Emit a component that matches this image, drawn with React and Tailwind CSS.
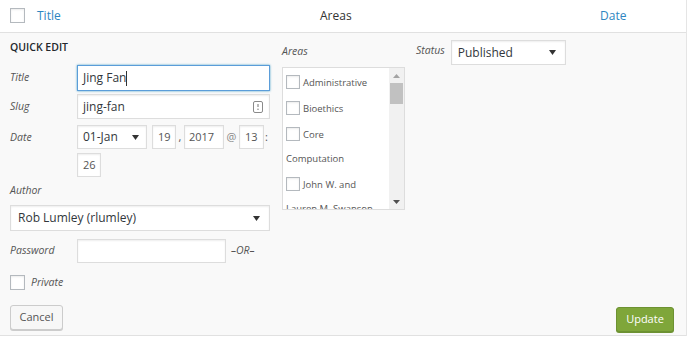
import React from "react";

const Check = ({ className = "" }) => (
  <span
    className={`inline-block bg-white border border-[#b4b9be] shadow-[inset_0_1px_2px_rgba(0,0,0,0.08)] ${className}`}
  />
);

const Caret = ({ color = "#333" }) => (
  <svg width="7" height="5" viewBox="0 0 7 5">
    <path d="M0 0h7L3.5 5z" fill={color} />
  </svg>
);

const field =
  "h-[24px] bg-white border border-[#ddd] shadow-[inset_0_1px_2px_rgba(0,0,0,0.07)] flex items-center";

const label = "italic text-[10.5px] text-[#555]";

export default function App() {
  const areas = ["Administrative", "Bioethics", "Core Computation", "John W. and Lauren M. Swanson"];

  return (
    <div className="w-[692px] h-[342px] bg-white overflow-hidden font-['Open_Sans',sans-serif] text-[#32373c]">
      <div className="w-[687px] border-r border-[#e5e5e5]">
        {/* list header */}
        <div className="h-[33px] border-b border-[#e1e1e1] flex items-center text-[12px] bg-white">
          <div className="w-[37px] pl-[10px] flex -mt-[1px]">
            <Check className="w-[15px] h-[15px]" />
          </div>
          <div className="w-[283px] text-[#2e86c1]">Title</div>
          <div className="w-[280px] text-[#333]">Areas</div>
          <div className="text-[#2e86c1]">Date</div>
        </div>

        {/* quick edit */}
        <div className="h-[303px] bg-[#f9f9f9] border-b border-[#e1e1e1] flex pl-[10px] pr-[12px]">
          {/* left column */}
          <div className="w-[260px] pt-[7px] flex flex-col">
            <div className="text-[10.5px] font-semibold leading-[14px] text-[#23282d] uppercase">
              Quick Edit
            </div>

            <div className="mt-[11px] flex items-center h-[26px]">
              <span className={`w-[67px] ${label}`}>Title</span>
              <div className="flex-1 h-[26px] bg-white border border-[#5b9dd9] shadow-[0_0_2px_rgba(30,140,190,0.8)] flex items-center px-[5px] text-[12px]">
                Jing Fan
                <span className="w-px h-[15px] bg-[#333]" />
              </div>
            </div>

            <div className="mt-[3px] flex items-center h-[25px]">
              <span className={`w-[67px] ${label}`}>Slug</span>
              <div className={`flex-1 !h-[25px] ${field} justify-between px-[5px] text-[12px]`}>
                jing-fan
                <svg width="10" height="12" viewBox="0 0 10 12" className="mr-[1px]">
                  <rect x="0.5" y="0.5" width="9" height="11" rx="1.5" fill="none" stroke="#8a8a8a" />
                  <path d="M5 3v3" stroke="#8a8a8a" strokeWidth="1.2" />
                  <circle cx="5" cy="8.3" r="0.8" fill="#8a8a8a" />
                </svg>
              </div>
            </div>

            <div className="mt-[6px] flex">
              <span className={`w-[67px] leading-[24px] ${label}`}>Date</span>
              <div className="flex-1 flex flex-wrap items-center gap-y-[4px] text-[11px] text-[#555]">
                <div className={`w-[70px] ${field} justify-between pl-[5px] pr-[7px] text-[12px] text-[#32373c]`}>
                  01-Jan
                  <Caret />
                </div>
                <span className="w-[5px]" />
                <div className={`w-[24px] ${field} pl-[5px]`}>19</div>
                <span className="w-[8px] text-center">,</span>
                <div className={`w-[40px] ${field} pl-[4px]`}>2017</div>
                <span className="w-[15px] text-center text-[#888]">@</span>
                <div className={`w-[25px] ${field} pl-[5px]`}>13</div>
                <span className="w-[5px] text-center">:</span>
                <div className={`w-[24px] ${field} pl-[5px]`}>26</div>
              </div>
            </div>

            <div className={`mt-[6px] leading-[14px] ${label}`}>Author</div>
            <div className={`mt-[8px] !h-[26px] ${field} justify-between pl-[7px] pr-[9px] text-[12px]`}>
              Rob Lumley (rlumley)
              <Caret />
            </div>

            <div className="mt-[8px] flex items-center h-[24px]">
              <span className={`w-[67px] ${label}`}>Password</span>
              <div className={`w-[149px] ${field}`} />
              <span className={`ml-[5px] ${label}`}>–OR–</span>
            </div>

            <div className="mt-[12px] flex items-center h-[15px]">
              <Check className="w-[15px] h-[15px]" />
              <span className={`ml-[6px] ${label}`}>Private</span>
            </div>

            <button className="mt-[15px] w-[53px] h-[25px] rounded-[3px] border border-[#ccc] bg-[#f7f7f7] shadow-[0_1px_0_#ccc] text-[11px] text-[#555]">
              Cancel
            </button>
          </div>

          {/* middle column */}
          <div className="ml-[12px] w-[123px] pt-[11px]">
            <div className={`leading-[14px] ${label}`}>Areas</div>
            <div className="mt-[9px] h-[143px] bg-white border border-[#ddd] flex overflow-hidden">
              <ul className="w-[96px] pl-[3px] pt-[3px] text-[9.5px] leading-[24px] text-[#555]">
                {areas.map((a) => (
                  <li key={a} className="mb-[2px]">
                    <Check className="w-[14px] h-[14px] align-middle mr-[3px] -mt-[2px]" />
                    {a}
                  </li>
                ))}
              </ul>
              <div className="ml-auto w-[15px] bg-[#f1f1f1] flex flex-col items-center">
                <div className="h-[15px] flex items-center justify-center">
                  <svg width="7" height="4" viewBox="0 0 7 4">
                    <path d="M0 4h7L3.5 0z" fill="#a3a3a3" />
                  </svg>
                </div>
                <div className="w-[13px] h-[21px] bg-[#c1c1c1]" />
                <div className="mt-auto h-[15px] flex items-center justify-center">
                  <svg width="7" height="4" viewBox="0 0 7 4">
                    <path d="M0 0h7L3.5 4z" fill="#505050" />
                  </svg>
                </div>
              </div>
            </div>
          </div>

          {/* right column */}
          <div className="ml-[11px] flex-1 flex flex-col pt-[7px] pb-[3px]">
            <div className="flex items-start">
              <span className={`mt-[2px] leading-[16px] ${label}`}>Status</span>
              <div className={`ml-[6px] w-[115px] !h-[25px] ${field} justify-between pl-[6px] pr-[9px] text-[12px]`}>
                Published
                <Caret />
              </div>
            </div>
            <button className="mt-auto self-end w-[58px] h-[25px] rounded-[3px] border border-[#6d9232] bg-[#7fa63a] shadow-[0_1px_0_#6d9232] text-[11px] text-white">
              Update
            </button>
          </div>
        </div>
      </div>
    </div>
  );
}
